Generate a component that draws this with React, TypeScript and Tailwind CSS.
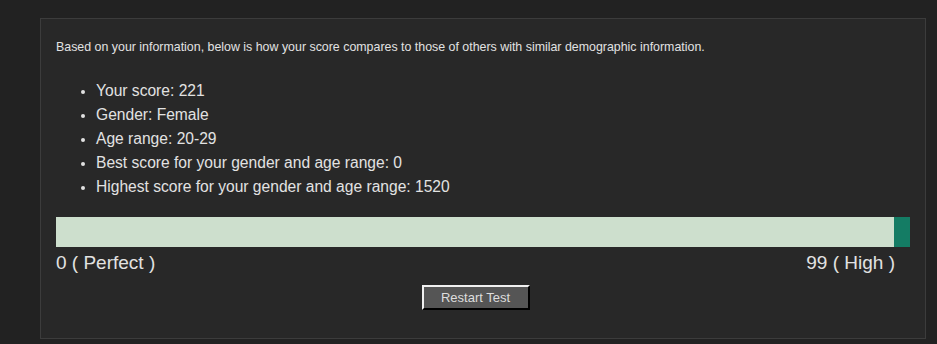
export default function App() {
  const items = [
    'Your score: 221',
    'Gender: Female',
    'Age range: 20-29',
    'Best score for your gender and age range: 0',
    'Highest score for your gender and age range: 1520',
  ]

  return (
    <div
      className="min-h-[344px] w-full bg-[#222222] pt-[18px] pl-[40px] pr-[11px] pb-[5px] text-[#e2e2e2]"
      style={{ fontFamily: '"Liberation Sans", Arial, sans-serif' }}
    >
      <div className="h-[321px] border border-[#3c3c3c] bg-[#282828] px-[15px] pt-[21px]">
        <p className="text-[12.4px] leading-[14px]">
          Based on your information, below is how your score compares to those of others with similar demographic information.
        </p>

        <ul className="mt-[25px] pl-[40px] text-[15.6px] leading-[24px]">
          {items.map((item) => (
            <li key={item} className="list-disc marker:text-[14px]">
              {item}
            </li>
          ))}
        </ul>

        {/* score bar */}
        <div className="mt-[18px] flex h-[30px]">
          <div className="flex-1 bg-[#cddfcd]" />
          <div className="w-[16px] bg-[#147c64]" />
        </div>

        <div className="pr-[15px]">
          <div className="mt-[5px] flex justify-between text-[19px] leading-[22px]">
            <span>0 ( Perfect )</span>
            <span>99 ( High )</span>
          </div>

          <div className="mt-[11px] flex justify-center">
            <button className="h-[25px] w-[108px] border-2 border-t-[#f0f0f0] border-l-[#f0f0f0] border-r-black border-b-black bg-[#555555] text-[13px] text-[#dddddd]">
              Restart Test
            </button>
          </div>
        </div>
      </div>
    </div>
  )
}
